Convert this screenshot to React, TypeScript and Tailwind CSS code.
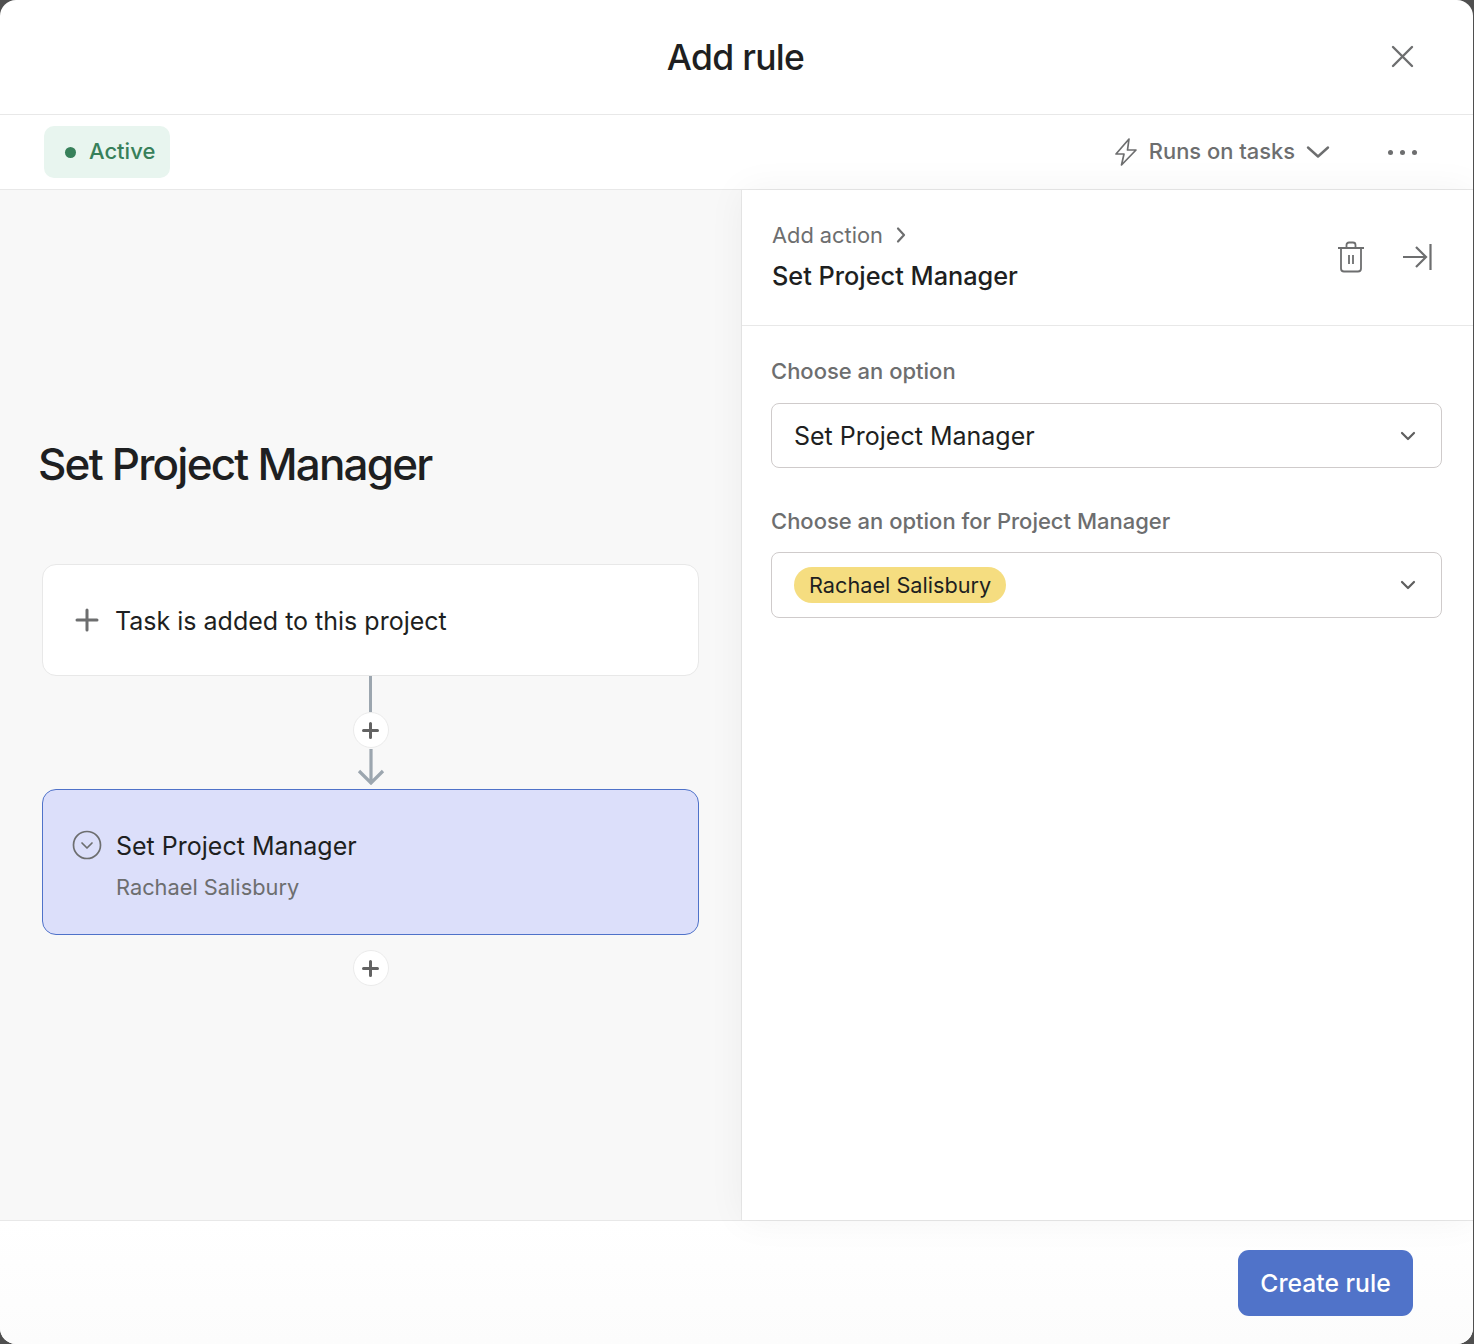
const font = { fontFamily: "Inter, 'Liberation Sans', sans-serif" };

function PlusButton() {
  return (
    <div className="w-9 h-9 rounded-full bg-white border border-[#ebebeb] flex items-center justify-center">
      <svg width="18" height="18" viewBox="0 0 18 18" fill="none" stroke="#636363" strokeWidth="3" strokeLinecap="round">
        <path d="M8.500 2.500v14M1.500 9.500h14" />
      </svg>
    </div>
  );
}

function Chevron() {
  return (
    <svg width="16" height="10" viewBox="0 0 16 10" fill="none" stroke="#5f5f5f" strokeWidth="2.2" strokeLinecap="round" strokeLinejoin="round">
      <path d="M2 2l6 6 6-6" />
    </svg>
  );
}

export default function App() {
  return (
    <div className="w-[1474px] h-[1344px] bg-[#4f4f4f]" style={font}>
      <div className="w-[1473px] h-[1344px] bg-white rounded-[16px] overflow-hidden flex flex-col">
        {/* Header */}
        <div className="h-[115px] shrink-0 border-b border-[#e8e8e8] flex items-center justify-center relative">
          <h1 className="pt-[2px] pr-[2px] text-[35.5px] font-medium tracking-[-0.7px] text-[#1e1f21]">Add rule</h1>
          <svg className="absolute left-[1391px] top-[45px]" width="23" height="23" viewBox="0 0 23 23" fill="none" stroke="#6d6e6f" strokeWidth="2.4" strokeLinecap="round">
            <path d="M2 2l19 19M21 2L2 21" />
          </svg>
        </div>

        {/* Toolbar */}
        <div className="h-[75px] shrink-0 border-b border-[#e8e8e8] flex items-center justify-between pl-[44px] pr-[56px]">
          <div className="h-[52px] w-[126px] rounded-[10px] bg-[#e8f5ef] flex items-center pl-[21px] gap-[13px]">
            <span className="w-[11px] h-[11px] rounded-full bg-[#37805a]" />
            <span className="text-[22px] leading-[26px] -mt-[2px] font-medium text-[#37805a]">Active</span>
          </div>
          <div className="flex items-center">
            <svg width="24" height="30" viewBox="0 0 24 30" fill="none" stroke="#6d6e6f" strokeWidth="1.7" strokeLinejoin="round">
              <path d="M15 2L2 17h8l-2.500 11L22 13h-8.500L15 2z" />
            </svg>
            <span className="ml-[11px] text-[21.9px] leading-[26px] -mt-[2px] font-medium text-[#6d6e6f]">Runs on tasks</span>
            <svg className="ml-[11px]" width="24" height="14" viewBox="0 0 24 14" fill="none" stroke="#6d6e6f" strokeWidth="2.4" strokeLinecap="round" strokeLinejoin="round">
              <path d="M2 2.500l10 9 10-9" />
            </svg>
            <div className="ml-[58px] flex gap-[7px]">
              <span className="w-[5px] h-[5px] rounded-full bg-[#6d6e6f]" />
              <span className="w-[5px] h-[5px] rounded-full bg-[#6d6e6f]" />
              <span className="w-[5px] h-[5px] rounded-full bg-[#6d6e6f]" />
            </div>
          </div>
        </div>

        {/* Body */}
        <div className="flex-1 flex min-h-0">
          <div className="w-[742px] shrink-0 bg-[#f8f8f8] border-r border-[#e8e8e8] pl-[42px] pr-[42px] pt-[247px]">
            <h2 className="-ml-[4px] text-[44px] leading-[54px] font-[550] tracking-[-1.8px] text-[#1e1f21]">Set Project Manager</h2>
            <div className="mt-[73px] h-[112px] rounded-[14px] bg-white border border-[#e8e8e8] flex items-center pl-[32px]">
              <svg width="24" height="24" viewBox="0 0 24 24" fill="none" stroke="#6d6e6f" strokeWidth="3" strokeLinecap="round">
                <path d="M12 2v20M2 12h20" />
              </svg>
              <span className="ml-[16px] mt-[4px] text-[25px] text-[#1e1f21]">Task is added to this project</span>
            </div>
            <div className="h-[113px] flex flex-col items-center">
              <div className="w-[3px] h-[36px] bg-[#9ca6af]" />
              <PlusButton />
              <svg width="28" height="37" viewBox="0 0 28 37" fill="none" stroke="#9ca6af" strokeWidth="3.200">
                <path d="M14 1v34M2 23l12 12 12-12" />
              </svg>
            </div>
            <div className="h-[146px] rounded-[14px] bg-[#dcdffa] border border-[#4f72c9] pl-[29px] pt-[40px]">
              <div className="flex items-center">
                <svg className="-mt-[2px] -ml-[0.5px]" width="30" height="30" viewBox="0 0 30 30" fill="none" stroke="#6d6e6f" strokeWidth="1.700" strokeLinecap="round" strokeLinejoin="round">
                  <circle cx="15" cy="15" r="13.500" />
                  <path d="M10 13l5 5 5-5" />
                </svg>
                <span className="ml-[14.5px] text-[25px] leading-[32px] text-[#1e1f21]">Set Project Manager</span>
              </div>
              <div className="ml-[44px] mt-[11px] text-[21.8px] leading-[28px] text-[#6d6e6f]">Rachael Salisbury</div>
            </div>
            <div className="mt-[15px] flex justify-center">
              <PlusButton />
            </div>
          </div>

          <div className="relative z-10 flex-1 flex flex-col min-w-0 bg-white shadow-[0_0_36px_rgba(0,0,0,0.05)]">
            <div className="h-[136px] shrink-0 border-b border-[#e8e8e8] pl-[30px] pr-[41px] flex items-center justify-between">
              <div className="-mt-[2px]">
                <div className="flex items-center gap-[13px] text-[21.8px] leading-[28px] text-[#6d6e6f]">
                  Add action
                  <svg width="10" height="18" viewBox="0 0 10 18" fill="none" stroke="#6d6e6f" strokeWidth="2.200" strokeLinecap="round" strokeLinejoin="round">
                    <path d="M2 2.500L8 9l-6 6.500" />
                  </svg>
                </div>
                <div className="mt-[11px] text-[25.300px] leading-[32px] font-medium text-[#1e1f21]">Set Project Manager</div>
              </div>
              <div className="flex items-center gap-[37px] -mt-[2px]">
                <svg width="28" height="32" viewBox="0 0 28 32" fill="none" stroke="#6d6e6f" strokeWidth="1.800">
                  <path d="M1 7h26M4 7v20.500A3 3 0 0 0 7 30.500h14a3 3 0 0 0 3-3V7M9.500 7V4a2.500 2.500 0 0 1 2.500-2.500h4A2.500 2.500 0 0 1 18.500 4v3M12 14v9M16 14v9" />
                </svg>
                <svg width="30" height="28" viewBox="0 0 30 28" fill="none" stroke="#6d6e6f" strokeWidth="2.200">
                  <path d="M1 14h23M14 4l10 10-10 10M28.500 1v26" />
                </svg>
              </div>
            </div>
            <div className="pl-[29px] pr-[31px] pt-[30px]">
              <div className="text-[22px] leading-[30px] font-medium text-[#6d6e6f]">Choose an option</div>
              <div className="mt-[17px] h-[65px] rounded-[8px] border border-[#cfcbcb] flex items-center justify-between pl-[22px] pr-[25px]">
                <span className="pt-[2px] text-[25px] text-[#1e1f21]">Set Project Manager</span>
                <Chevron />
              </div>
              <div className="mt-[38px] text-[22px] leading-[30px] font-medium text-[#6d6e6f]">Choose an option for Project Manager</div>
              <div className="mt-[16px] h-[66px] rounded-[8px] border border-[#cfcbcb] flex items-center justify-between pl-[22px] pr-[25px]">
                <span className="h-[36px] px-[15px] rounded-full bg-[#f5dd80] flex items-center text-[21.700px] text-[#1e1f21]">Rachael Salisbury</span>
                <Chevron />
              </div>
            </div>
          </div>
        </div>

        {/* Footer */}
        <div className="h-[124px] shrink-0 border-t border-[#e8e8e8] bg-gradient-to-b from-white to-[#fcfcfc] flex justify-end pt-[29px] pr-[60px]">
          <button className="w-[175px] h-[66px] rounded-[11px] bg-[#5073c9] text-white text-[24.700px] font-medium pt-[2px]">Create rule</button>
        </div>
      </div>
    </div>
  );
}
